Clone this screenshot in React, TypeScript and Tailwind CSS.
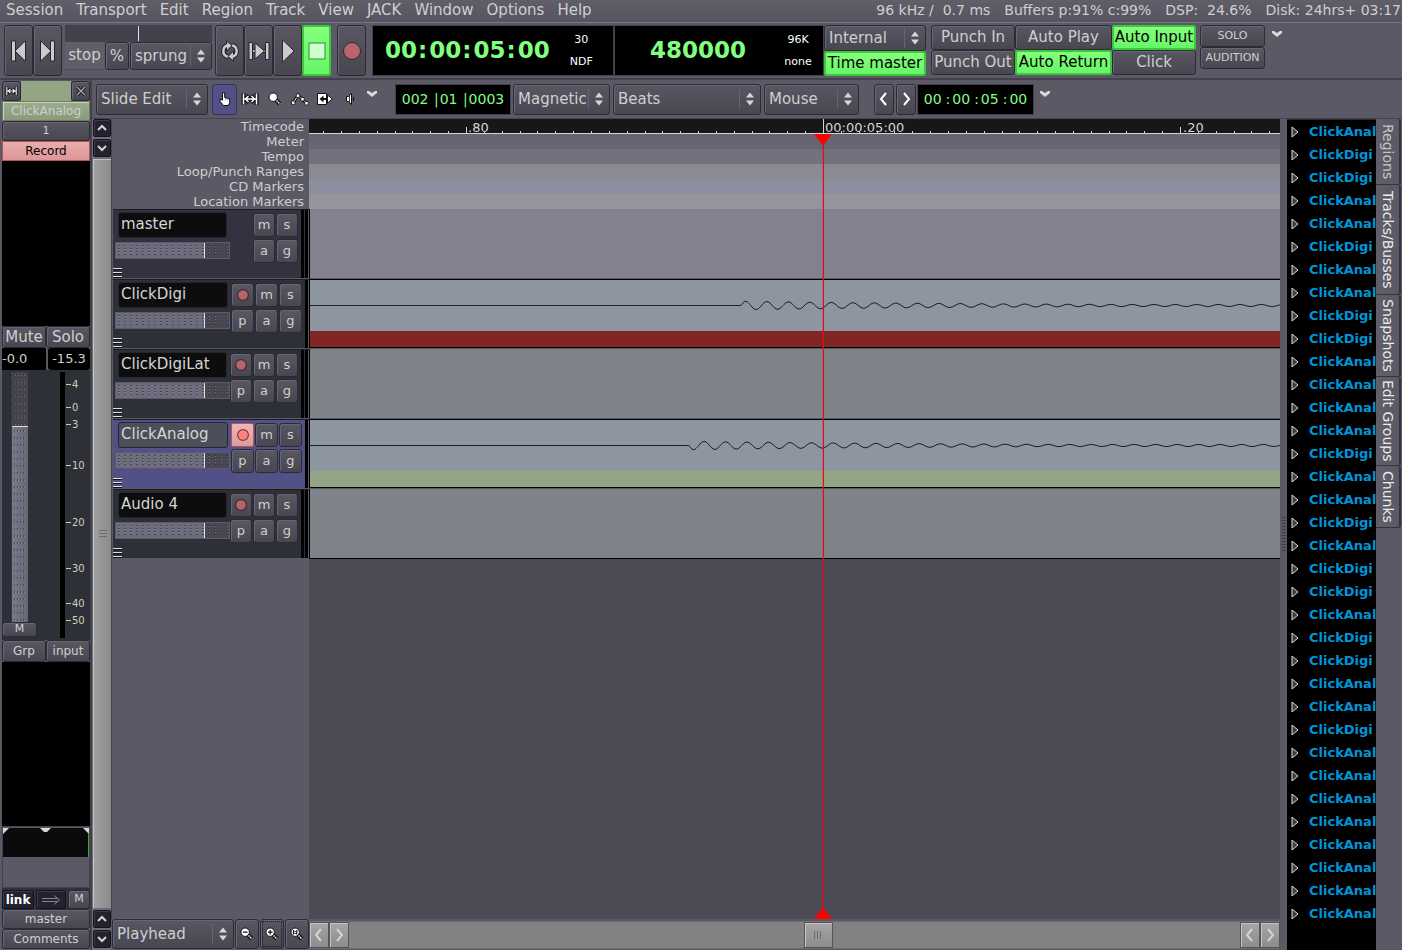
import React from "react";

const FACE =
  "bg-linear-to-b from-[#585762] to-[#484751] border border-[#2c2b33] shadow-[inset_1px_1px_0_#67657a] rounded-[3px]";
const DARK =
  "bg-[#23222e] border border-[#14141c] shadow-[inset_1px_1px_0_#3a3950] rounded-[2px]";
const GREEN =
  "bg-linear-to-b from-[#84ff7c] to-[#66f668] border-2 border-[#3cc83c] rounded-[3px] text-black";
const GREY =
  "bg-linear-to-b from-[#a6a6a6] to-[#8c8c8c] border border-[#55545c] shadow-[inset_1px_1px_0_#c4c4c4]";

type BtnProps = React.ButtonHTMLAttributes<HTMLButtonElement> & { face?: string };

function Btn({ face = FACE, className = "", children, ...rest }: BtnProps) {
  return (
    <button
      type="button"
      className={`flex shrink-0 items-center justify-center overflow-hidden whitespace-nowrap ${face} ${className}`}
      {...rest}
    >
      {children}
    </button>
  );
}

function Select({ label, value, className = "" }: { label: string; value: string; className?: string }) {
  return (
    <div className={`relative flex shrink-0 ${FACE} ${className}`}>
      <select
        aria-label={label}
        defaultValue={value}
        className="h-full w-full appearance-none bg-transparent pl-1 text-[15px] leading-5 text-[#cfcfcf] outline-none"
      >
        <option>{value}</option>
      </select>
      <svg className="pointer-events-none absolute right-px top-1/2 -translate-y-1/2" width="20" height="24">
        <path d="M0.5 2v20" stroke="#65647a" />
        <path d="M7 10.5h8L11 5.5z M7 13.5h8l-4 5z" fill="#d8d8d8" />
      </svg>
    </div>
  );
}

function Chevron({ dir, color = "#d4d4d4" }: { dir: "left" | "right" | "up" | "down"; color?: string }) {
  const d = {
    left: "M9 2 L4 8 L9 14",
    right: "M5 2 L10 8 L5 14",
    up: "M3 10 L7 6 L11 10",
    down: "M3 6 L7 10 L11 6",
  }[dir];
  return (
    <svg width="14" height="16" fill="none" stroke={color} strokeWidth="2">
      <path d={d} />
    </svg>
  );
}

function Caret() {
  return (
    <svg width="12" height="8" className="shrink-0">
      <path d="M1 1h2l3 2 3-2h2v2L6 7 1 3z" fill="#d8d8d8" />
    </svg>
  );
}

function Rec({ on = false }: { on?: boolean }) {
  return (
    <svg width="14" height="14">
      <circle cx="7" cy="7" r="5.4" fill={on ? "#ff8080" : "#b5656b"} stroke={on ? "#7a3a3a" : "#3a2a30"} strokeWidth="1.2" />
    </svg>
  );
}

/* ---------- menu bar ---------- */

const MENUS = ["Session", "Transport", "Edit", "Region", "Track", "View", "JACK", "Window", "Options", "Help"];

function MenuBar() {
  return (
    <header className="flex h-[22px] items-center justify-between bg-linear-to-b from-[#5f5e69] to-[#55545f] pr-px text-[15px] leading-5">
      <nav className="flex gap-px pb-[2px]">
        {MENUS.map((m) => (
          <button key={m} type="button" className="px-[6px]">
            {m}
          </button>
        ))}
      </nav>
      <div className="flex gap-[14px] whitespace-pre pb-[2px] text-[14px]">
        <span>{"96 kHz /  0.7 ms"}</span>
        <span>Buffers p:91% c:99%</span>
        <span>{"DSP:  24.6%"}</span>
        <span>Disk: 24hrs+ 03:17</span>
      </div>
    </header>
  );
}

/* ---------- transport ---------- */

const IC = { fill: "#cbcbcb", stroke: "#26252d", strokeWidth: 1 };

function Transport() {
  return (
    <section className="flex h-[58px] items-start border-b-2 border-t border-b-[#43424c] border-t-[#77768a] pl-1 pt-[2px]">
      <div className="flex">
        <Btn aria-label="Go to start" className="h-[51px] w-[29px]">
          <svg width="17" height="22" {...IC}>
            <path d="M1.5 1h4v20h-4z M15.5 .8v20.400L5 11z" />
          </svg>
        </Btn>
        <Btn aria-label="Go to end" className="h-[51px] w-[29px]">
          <svg width="17" height="22" {...IC}>
            <path d="M11.5 1h4v20h-4z M1.5 .8v20.400L12 11z" />
          </svg>
        </Btn>
      </div>
      <div className="ml-[3px] flex w-[147px] flex-col">
        <div className="flex h-[17px] justify-center bg-[#43424c] py-[1px]">
          <div className="w-px bg-[#d5e2f5]" />
        </div>
        <div className="flex h-7">
          <div className="flex w-[39px] items-center justify-center border-b border-[#4a4954] bg-[#5f5e69] text-[15px]">stop</div>
          <Btn className="ml-px w-6 text-[15px]">%</Btn>
          <Select label="Shuttle" value="sprung" className="ml-px w-[82px]" />
        </div>
      </div>
      <div className="ml-[3px] flex">
        <Btn aria-label="Loop" className="h-[51px] w-[29px]">
          <svg width="18" height="22" fill="none">
            <g stroke="#222129" strokeWidth="4.500">
              <path d="M7 5A6 6.200 0 0 0 7 17" />
              <path d="M11 17A6 6.200 0 0 0 11 5" />
            </g>
            <path d="M5.500 1L11 5.500 5.500 11z M12.500 21L7 16.500 12.500 11z" fill="#cbcbcb" stroke="#222129" />
            <path d="M6.800 5.200A6 6 0 0 0 6.800 16.800 M11.200 16.800A6 6 0 0 0 11.200 5.200" stroke="#cbcbcb" strokeWidth="2.500" />
          </svg>
        </Btn>
        <Btn aria-label="Play range" className="h-[51px] w-[29px]">
          <svg width="22" height="18" {...IC}>
            <path d="M4 7.500h14v3H4z" />
            <path d="M1 .5h3.500v17H1z M17.500 .5H21v17h-3.500z" />
            <path d="M7 1v16L16.500 9z" />
          </svg>
        </Btn>
        <Btn aria-label="Play" className="h-[51px] w-[29px]">
          <svg width="14" height="24" {...IC}>
            <path d="M1.500 .8v22.400L13 12z" />
          </svg>
        </Btn>
        <Btn aria-label="Stop" face={GREEN} className="h-[51px] w-[29px]">
          <svg width="18" height="18">
            <rect x="1" y="1" width="16" height="16" fill="#ccffcc" stroke="#3a8a3a" />
          </svg>
        </Btn>
        <Btn aria-label="Record" className="ml-[6px] h-[51px] w-[29px]">
          <svg width="20" height="20">
            <circle cx="10" cy="10" r="8.5" fill="#b5656b" stroke="#33272d" />
          </svg>
        </Btn>
      </div>

      <div className="ml-[6px] flex h-[51px] w-[242px] border border-[#43424c] bg-black">
        <div className="flex flex-1 items-center pl-3 text-[23px] font-bold text-[#80ff80]">
          00<Colon big />00<Colon big />05<Colon big />00
        </div>
        <div className="flex w-16 flex-col items-center justify-center gap-[2px] text-[11px] leading-5 text-white">
          <span>30</span>
          <span>NDF</span>
        </div>
      </div>
      <div className="flex h-[51px] w-[210px] border border-[#43424c] bg-black">
        <div className="flex flex-1 items-center justify-center pl-2 text-[23px] font-bold text-[#80ff80]">480000</div>
        <div className="flex w-[50px] flex-col items-center justify-center gap-[2px] text-[11px] leading-5 text-white">
          <span>96K</span>
          <span>none</span>
        </div>
      </div>

      <div className="flex w-[102px] flex-col text-[15px]">
        <Select label="Sync source" value="Internal" className="h-[26px]" />
        <Btn face={GREEN} className="h-[25px]">Time master</Btn>
      </div>
      <div className="ml-[5px] grid grid-cols-[84px_97px_84px] grid-rows-[25px_25px] text-[15px]">
        <Btn>Punch In</Btn>
        <Btn>Auto Play</Btn>
        <Btn face={GREEN}>Auto Input</Btn>
        <Btn>Punch Out</Btn>
        <Btn face={GREEN}>Auto Return</Btn>
        <Btn>Click</Btn>
      </div>
      <div className="ml-1 flex w-[65px] flex-col text-[11px]">
        <Btn className="h-[22px]">SOLO</Btn>
        <Btn className="h-[22px]">AUDITION</Btn>
      </div>
      <div className="ml-[6px] pt-[5px]">
        <Caret />
      </div>
    </section>
  );
}

function Colon({ big = false }: { big?: boolean }) {
  return <span className={big ? "pl-px pr-[2px]" : "pl-1 pr-[2px]"}>:</span>;
}

/* ---------- edit toolbar ---------- */

function RangeIcon({ w = 18 }: { w?: number }) {
  return (
    <svg width={w} height="12" viewBox="0 0 18 12">
      <path d="M2.5 0v12 M15.5 0v12 M3 6h12 M8 2.5L4.5 6 8 9.5 M10 2.5L13.5 6 10 9.5" fill="none" stroke="#111" strokeWidth="4" />
      <path d="M2.5 0.5v11 M15.5 0.5v11 M3 6h12 M7.5 3L4.5 6l3 3 M10.5 3l3 3-3 3" fill="none" stroke="#fff" strokeWidth="1.5" />
    </svg>
  );
}

function Magnifier({ sign }: { sign?: string }) {
  return (
    <svg width="14" height="14">
      <path d="M7 7l5 5" stroke="#111" strokeWidth="4" />
      <path d="M7 7l5 5" stroke="#fff" strokeWidth="1.6" strokeDasharray="1.4 0.8" />
      <circle cx="5.2" cy="5.2" r="4.2" fill="#fff" stroke="#111" />
      {sign && <path d={sign} stroke="#111" strokeWidth="1.2" fill="none" />}
    </svg>
  );
}

function EditToolbar() {
  const tool = "flex h-[31px] w-[25px] shrink-0 items-center justify-center";
  return (
    <div className="flex h-[39px] items-center border-b border-[#45444e] pl-1 text-[15px]">
      <Select label="Edit mode" value="Slide Edit" className="h-[31px] w-[112px]" />
      <div className="ml-1 flex">
        <button type="button" aria-label="Object tool" className="flex h-[31px] w-[25px] items-center justify-center rounded-[3px] border border-[#35355c] bg-[#515187]">
          <svg width="12" height="14">
            <path d="M3.5 .8h2.200v4.700l5 1.200v4.200l-1.700 2.600h-4.500L1 9.200V7.200l2.500 1z" fill="#fff" stroke="#111" strokeWidth="1" />
            <path d="M6.800 6v2 M8.800 6.500v2" stroke="#555" strokeWidth=".7" />
          </svg>
        </button>
        <button type="button" aria-label="Range tool" className={tool}><RangeIcon /></button>
        <button type="button" aria-label="Zoom tool" className={tool}><Magnifier /></button>
        <button type="button" aria-label="Gain tool" className={tool}>
          <svg width="18" height="14">
            <path d="M2 11L7 3.500 11.500 7.500 15.500 11.500" fill="none" stroke="#111" strokeWidth="3" />
            <path d="M2 11L7 3.500 11.500 7.500 15.500 11.500" fill="none" stroke="#fff" />
            <path d="M.5 9h3.400v3.400H.5z M5.300 2h3.400v3.400H5.300z M9.800 5.500h3.400v3.400H9.800z M13.800 9.500h3.400v3.400h-3.400z" fill="#fff" stroke="#111" strokeWidth=".8" />
          </svg>
        </button>
        <button type="button" aria-label="Stretch tool" className={tool}>
          <svg width="16" height="12">
            <path d="M.5.5h9v11h-9z" fill="#fff" stroke="#111" />
            <path d="M2.500 6L6.500 2.500v7z" fill="#111" />
            <path d="M6 6h5" stroke="#111" strokeWidth="2" />
            <path d="M10.500 2L15.300 6l-4.800 4z" fill="#fff" stroke="#111" />
          </svg>
        </button>
        <button type="button" aria-label="Audition tool" className={tool}>
          <svg width="10" height="12">
            <path d="M1.500 3.500h2l3-3v11l-3-3h-2z" fill="#fff" stroke="#111" />
            <path d="M4.500 3v6" stroke="#111" strokeWidth=".8" />
            <path d="M8.500 4v4" stroke="#111" />
          </svg>
        </button>
      </div>
      <div className="ml-1 pb-[10px]"><Caret /></div>
      <div className="ml-[17px] flex h-[31px] w-[116px] items-center justify-center whitespace-pre border border-[#43424c] bg-black text-[14px] text-[#80ff80]">
        <span>002 </span>
        <span className="px-px">|</span>
        <span>01 </span>
        <span className="px-px">|</span>
        <span>0003</span>
      </div>
      <Select label="Snap mode" value="Magnetic" className="ml-[2px] h-[31px] w-[97px]" />
      <Select label="Snap unit" value="Beats" className="ml-[3px] h-[31px] w-[148px]" />
      <Select label="Zoom focus" value="Mouse" className="ml-[3px] h-[31px] w-[95px]" />
      <div className="ml-[15px] flex gap-[2px]">
        <Btn aria-label="Nudge back" className="h-[31px] w-5"><Chevron dir="left" color="#fff" /></Btn>
        <Btn aria-label="Nudge forward" className="h-[31px] w-5"><Chevron dir="right" color="#fff" /></Btn>
      </div>
      <div className="ml-px flex h-[31px] w-[117px] items-center justify-center border border-[#43424c] bg-black text-[14px] text-[#80ff80]">
        00<Colon />00<Colon />05<Colon />00
      </div>
      <div className="ml-[5px] pb-[10px]"><Caret /></div>
    </div>
  );
}

/* ---------- mixer strip ---------- */

const SCALE: [string, number][] = [
  ["4", 12], ["0", 35], ["3", 52], ["10", 93], ["20", 150], ["30", 196], ["40", 231], ["50", 248],
];

function MixerStrip() {
  return (
    <aside className="flex w-[92px] shrink-0 flex-col border-r-2 border-[#43424c] pl-[2px] text-[12px]">
      <div className="flex h-[21px] pt-px">
        <Btn aria-label="Strip width" className="w-[19px]"><RangeIcon w={13} /></Btn>
        <div className="flex-1 bg-[#94a585]" />
        <Btn aria-label="Close strip" className="w-[19px]">
          <svg width="12" height="12" fill="none">
            <path d="M2 2l8 8 M10 2l-8 8" stroke="#1c1b22" strokeWidth="3.6" />
            <path d="M2 2l8 8 M10 2l-8 8" stroke="#a8a8b0" strokeWidth="1.4" />
          </svg>
        </Btn>
      </div>
      <Btn face="bg-linear-to-b from-[#9bad8c] to-[#8a9b7b] border border-[#6e7d62] shadow-[inset_1px_1px_0_#c3d3b4]" className="h-5">ClickAnalog</Btn>
      <Btn className="h-5 text-[11px]">1</Btn>
      <Btn face="bg-linear-to-b from-[#e9adad] to-[#dd9696] border border-[#b55555] text-black" className="h-5">Record</Btn>
      <div className="h-[165px] bg-black" />
      <div className="flex h-[22px] text-[15px]">
        <Btn className="w-11">Mute</Btn>
        <Btn className="flex-1">Solo</Btn>
      </div>
      <div className="flex h-[22px] gap-[2px] text-[13px] leading-[22px]">
        <div className="w-11 bg-black">-0.0</div>
        <div className="flex-1 rounded-[3px] bg-black text-center">-15.3</div>
      </div>
      <div className="flex h-[270px] bg-[#2d3036] pt-[2px]">
        <div className="flex w-[35px] flex-col items-center">
          <div className="relative h-[250px] w-[17px]">
            <svg width="17" height="250">
              <defs>
                <pattern id="vdots" width="17" height="7" patternUnits="userSpaceOnUse">
                  <path d="M3 2h1v2h-1z M6 2h1v2h-1z M9 2h1v2h-1z M12 2h1v2h-1z" fill="#33323a" fillOpacity=".6" />
                  <path d="M4 3h1v1h-1z M7 3h1v1h-1z M10 3h1v1h-1z M13 3h1v1h-1z" fill="#a9a8b8" fillOpacity=".5" />
                </pattern>
                <linearGradient id="vfill"><stop stopColor="#7b7a8a" /><stop offset="1" stopColor="#676676" /></linearGradient>
              </defs>
              <rect width="17" height="250" fill="#46454f" />
              <rect y="54" width="17" height="196" fill="url(#vfill)" />
              <rect width="17" height="250" fill="url(#vdots)" />
              <path d="M1 54.5h16" stroke="#dedede" />
              <path d="M.5 0v250" stroke="#3a3943" />
            </svg>
            <input aria-label="Gain" type="range" className="absolute inset-0 h-full w-full opacity-0" />
          </div>
          <Btn className="h-[15px] w-[35px] text-[11px]">M</Btn>
        </div>
        <svg className="ml-[23px]" width="30" height="266">
          <rect width="5" height="266" fill="#000" />
          {SCALE.map(([t, y]) => (
            <g key={t}>
              <path d={`M6 ${y + 0.5}h5`} stroke="#cfcfb8" />
              <text x="12" y={y + 4} fontSize="10" fill="#cfcfb8">{t}</text>
            </g>
          ))}
        </svg>
      </div>
      <div className="flex h-[22px]">
        <Btn className="w-11">Grp</Btn>
        <Btn className="flex-1">input</Btn>
      </div>
      <div className="min-h-[100px] flex-1 bg-black" />
      <div className="h-[62px] border border-[#45444e] pt-px">
        <svg width="86" height="29">
          <rect width="86" height="29" fill="#0b0b0b" />
          <path d="M0 0h6L0 6z M86 0h-6l6 6z M37 0h11l-4 4h-3z" fill="#d8d8d8" />
          <path d="M85.500 6v23" stroke="#30b030" />
        </svg>
      </div>
      <div className="flex h-[21px] gap-[2px] bg-[#33323b] pt-[2px]">
        <Btn face={DARK} className="w-8 font-bold text-white">link</Btn>
        <Btn face={DARK} aria-label="Post fader" className="flex-1">
          <svg width="20" height="10" fill="none" stroke="#858590">
            <path d="M1 3.5h15 M1 6.5h15 M13 .5L18.500 5 13 9.500" />
          </svg>
        </Btn>
        <Btn className="w-[22px] text-[11px]">M</Btn>
      </div>
      <Btn className="h-5">master</Btn>
      <Btn className="mb-px h-5">Comments</Btn>
    </aside>
  );
}

/* ---------- editor ---------- */

const RULERS = [
  { label: "Timecode", bg: "" },
  { label: "Meter", bg: "bg-[#666571]" },
  { label: "Tempo", bg: "bg-[#72717c]" },
  { label: "Loop/Punch Ranges", bg: "bg-[#8b8a93]" },
  { label: "CD Markers", bg: "bg-[#8d8ea0]" },
  { label: "Location Markers", bg: "bg-[#96959d]" },
];

type Track = {
  name: string;
  kind: "bus" | "stereo" | "mono";
  selected?: boolean;
  wave?: { start: number; dir: 1 | -1; bar: string };
};

const TRACKS: Track[] = [
  { name: "master", kind: "bus" },
  { name: "ClickDigi", kind: "stereo", wave: { start: 430, dir: -1, bar: "bg-[#822625]" } },
  { name: "ClickDigiLat", kind: "mono" },
  { name: "ClickAnalog", kind: "stereo", selected: true, wave: { start: 378, dir: 1, bar: "bg-[#94a585]" } },
  { name: "Audio 4", kind: "mono" },
];

function HFader({ id }: { id: string }) {
  return (
    <div className="relative h-[17px] w-[115px]">
      <svg width="115" height="17">
        <defs>
          <pattern id={id} width="6" height="17" patternUnits="userSpaceOnUse">
            <path d="M3 3h2v1h-2z M3 6h2v1h-2z M3 9h2v1h-2z M3 12h2v1h-2z" fill="#33323a" fillOpacity=".65" />
            <path d="M4 4h1v1h-1z M4 7h1v1h-1z M4 10h1v1h-1z" fill="#b0afbf" fillOpacity=".4" />
          </pattern>
        </defs>
        <rect width="115" height="17" fill="#494852" />
        <rect width="90" height="17" fill="#6d6c7c" />
        <rect width="115" height="17" fill={`url(#${id})`} />
        <rect x=".5" y=".5" width="114" height="16" fill="none" stroke="#5c5b69" />
        <path d="M89.500 1v15" stroke="#e0e0e0" />
      </svg>
      <input aria-label="Track gain" type="range" className="absolute inset-0 h-full w-full opacity-0" />
    </div>
  );
}

function TrackHeader({ t, i }: { t: Track; i: number }) {
  const wide = t.kind === "stereo";
  const bg = t.selected ? "bg-[#515187]" : t.kind === "bus" ? "bg-[#343240]" : "bg-[#2d3036]";
  const cell = wide ? "h-6 w-[23px]" : "h-6 w-[22px]";
  const keys = t.kind === "bus" ? [["m", "s"], ["a", "g"]] : [["rec", "m", "s"], ["p", "a", "g"]];
  return (
    <div className={`flex h-[70px] border-t border-t-[#1c1c22] border-b border-b-[#5a5965] ${bg}`}>
      <div className="flex w-[117px] flex-col pt-[2px]">
        <input
          aria-label="Track name"
          defaultValue={t.name}
          className={`ml-[5px] h-[26px] rounded-[3px] border border-[#26262c] px-[2px] pb-[3px] text-[15px] text-[#d5d5d5] outline-none ${
            wide ? "w-[110px]" : "w-[109px]"
          } ${t.selected ? "bg-[#4b4f59]" : "bg-[#0d0d0d]"}`}
        />
        <div className="ml-[2px] mt-1"><HFader id={`hdots${i}`} /></div>
        <svg className="mt-[9px]" width="10" height="10">
          <path d="M0 1.500h9 M0 5.500h9 M0 9.500h9" stroke="#111" strokeWidth="1" />
          <path d="M0 .5h9 M0 4.500h9 M0 8.500h9" stroke="#e0e0e0" strokeWidth="1" />
        </svg>
      </div>
      <div className="flex flex-1 flex-col items-end gap-[2px] pr-[3px] pt-[3px]">
        {keys.map((row) => (
          <div key={row.join("")} className="flex gap-px">
            {row.map((k) =>
              k === "rec" ? (
                <Btn
                  key={k}
                  aria-label="Record enable"
                  face={t.selected ? "bg-linear-to-b from-[#f0b4b4] to-[#de9a9a] border border-[#b55555] rounded-[2px]" : FACE}
                  className={cell}
                >
                  <Rec on={t.selected} />
                </Btn>
              ) : (
                <Btn key={k} className={`${cell} pb-px text-[13px]`}>{k}</Btn>
              ),
            )}
          </div>
        ))}
      </div>
      {!wide && <div className="mr-px w-[3px] bg-black" />}
      <div className="w-[3px] bg-black" />
      <div className="w-px bg-[#5a5965]" />
    </div>
  );
}

function wavePath(start: number, dir: number) {
  const pts: string[] = [`M0 25.500H${start}`];
  for (let x = 0; x < 2600; x += 1) {
    const amp = Math.max(1, 4.3 * Math.exp(-x / 270)) * Math.min(1, x / 4);
    const y = 25.5 + dir * amp * Math.sin((2 * Math.PI * x) / 21.5);
    pts.push(`L${start + x} ${y.toFixed(1)}`);
  }
  return pts.join("");
}

function TrackLane({ t }: { t: Track }) {
  if (t.wave) {
    return (
      <div className="flex h-[70px] flex-col border-b border-[#5a5965]">
        <div className="flex flex-1 flex-col border border-r-0 border-black bg-[#8d95a1]">
          <svg className="block w-full flex-1" height="51">
            <path d={wavePath(t.wave.start, t.wave.dir)} fill="none" stroke="#1d2126" strokeWidth="1" />
          </svg>
          <div className={`h-4 ${t.wave.bar}`} />
        </div>
      </div>
    );
  }
  return (
    <div
      className={`h-[70px] border-b border-l border-b-[#5a5965] border-l-black last:border-b-black ${
        t.kind === "bus" ? "bg-[#858090]" : "bg-[#7e8389]"
      }`}
    />
  );
}

function TimeRuler() {
  const ticks = Array.from({ length: 140 }, (_, i) => 514 + (i - 28) * 17.85).filter((x) => x >= 0);
  return (
    <div className="h-[15px] border-b border-[#d4d4d4] bg-[#171717]">
      <svg className="block w-full overflow-visible" height="14">
        {ticks.map((x) => (
          <path key={x} d={`M${Math.round(x) + 0.5} 12v2`} stroke="#d4d4d4" />
        ))}
        <path d="M157.500 8v6 M514.500 0v14 M871.500 8v6" stroke="#d4d4d4" />
        <g fontSize="13" fill="#d4d4d4">
          <text x="159" y="13">.80</text>
          <text x="516" y="13">00:00:05:00</text>
          <text x="874" y="13">.20</text>
        </g>
      </svg>
    </div>
  );
}

function Editor() {
  return (
    <main className="flex min-w-0 flex-1 flex-col">
      <div className="flex flex-1">
        <div className="w-[198px] shrink-0 border-l border-[#45444e] pl-px">
          {RULERS.map((r) => (
            <div key={r.label} className="h-[15px] pr-[5px] text-right text-[13px] leading-[15px]">{r.label}</div>
          ))}
          {TRACKS.map((t, i) => (
            <TrackHeader key={t.name} t={t} i={i} />
          ))}
        </div>
        <div className="relative min-w-0 flex-1 overflow-hidden bg-[#4c4b55]">
          <TimeRuler />
          {RULERS.slice(1).map((r) => (
            <div key={r.label} className={`h-[15px] ${r.bg}`} />
          ))}
          <div>
            {TRACKS.map((t) => (
              <TrackLane key={t.name} t={t} />
            ))}
          </div>
          <div className="absolute bottom-0 left-[505px] top-[15px] flex w-[18px] flex-col items-center">
            <svg width="18" height="11" className="shrink-0"><path d="M0 0h18L9.500 11h-1z" fill="#f00" /></svg>
            <div className="w-[2px] flex-1 border-l border-[#ff0000]/25 bg-[#e01010] bg-clip-padding" />
            <svg width="18" height="11" className="shrink-0"><path d="M0 11h18L9.500 0h-1z" fill="#f00" /></svg>
          </div>
        </div>
      </div>
      <div className="flex h-[31px] items-start">
        <Select label="Zoom focus point" value="Playhead" className="ml-px h-[30px] w-[122px]" />
        <div className="flex">
          <Btn aria-label="Zoom out" className="ml-px h-[30px] w-6"><Magnifier sign="M3 5.200h4.500" /></Btn>
          <Btn aria-label="Zoom in" className="ml-px h-[30px] w-6 outline-1 -outline-offset-3 outline-dotted outline-[#1a1a20]"><Magnifier sign="M3 5.200h4.500 M5.200 3v4.500" /></Btn>
          <Btn aria-label="Zoom to session" className="ml-px h-[30px] w-6"><Magnifier sign="M3.500 3v4.500 M6.800 3v4.500 M5.200 4v1 M5.200 6v1" /></Btn>
        </div>
        <div className="mt-[2px] flex h-7 min-w-0 flex-1 items-stretch border-y border-[#6b6a75] bg-[#828282]">
          <Btn aria-label="Scroll left" face={GREY} className="w-5"><Chevron dir="left" /></Btn>
          <Btn aria-label="Scroll right" face={GREY} className="w-5"><Chevron dir="right" /></Btn>
          <div className="flex-[456]" />
          <Btn aria-label="Scroll thumb" face={GREY} className="w-[29px]">
            <svg width="8" height="8"><path d="M.5 0v8 M3.500 0v8 M6.500 0v8" stroke="#6c6c6c" /></svg>
          </Btn>
          <div className="flex-[408]" />
          <Btn aria-label="Page left" face={GREY} className="w-5"><Chevron dir="left" /></Btn>
          <Btn aria-label="Page right" face={GREY} className="w-5"><Chevron dir="right" /></Btn>
        </div>
      </div>
    </main>
  );
}

function VScroll() {
  return (
    <div className="flex w-[19px] shrink-0 flex-col gap-[2px] bg-[#6f6e76] pb-[2px] pl-px">
      <Btn aria-label="Page up" face={DARK} className="h-[18px]"><Chevron dir="up" /></Btn>
      <Btn aria-label="Page down" face={DARK} className="h-[18px]"><Chevron dir="down" /></Btn>
      <div className="flex flex-1 items-center justify-center border-l border-t border-[#c4c4c4] bg-linear-to-r from-[#a0a0a0] to-[#8a8a8a]">
        <svg width="8" height="8"><path d="M0 .5h8 M0 3.500h8 M0 6.500h8" stroke="#6c6c6c" /></svg>
      </div>
      <Btn aria-label="Scroll up" face={DARK} className="h-[18px]"><Chevron dir="up" /></Btn>
      <Btn aria-label="Scroll down" face={DARK} className="h-[18px]"><Chevron dir="down" /></Btn>
    </div>
  );
}

/* ---------- region list ---------- */

const REGIONS = "ADDAADAADDAAAADAADADDADDAADAAAAAAAA".split("").map((c) => (c === "A" ? "ClickAnalog" : "ClickDigi"));

const TABS: [string, string][] = [
  ["Regions", "h-[66px] text-[#c6c6c6]"],
  ["Tracks/Busses", "h-[110px] text-[#ececec]"],
  ["Snapshots", "h-[82px] text-[#ececec]"],
  ["Edit Groups", "h-[89px] text-[#ececec]"],
  ["Chunks", "h-[62px] text-[#ececec]"],
];

function RegionPanel() {
  return (
    <aside className="flex shrink-0">
      <div className="flex w-[7px] items-center justify-center">
        <svg width="4" height="36">
          {Array.from({ length: 12 }, (_, i) => (
            <path key={i} d={`M0 ${i * 3 + 0.5}h4`} stroke="#3e3d47" />
          ))}
        </svg>
      </div>
      <ul className="w-[89px] overflow-hidden border-t border-[#2c2b33] bg-black pb-6">
        {REGIONS.map((r, i) => (
          <li key={i} className="flex h-[23px] items-center text-[13px] font-bold text-[#0095d8]">
            <svg width="8" height="12" className="ml-1 mr-[10px] shrink-0">
              <path d="M1 1v10L7 6z" fill="#3c3b45" stroke="#dcdcdc" strokeWidth="1" />
            </svg>
            {r}
          </li>
        ))}
      </ul>
      <div className="mr-px flex w-[25px] flex-col">
        {TABS.map(([name, cls]) => (
          <button
            key={name}
            type="button"
            className={`flex items-center justify-center rounded-r-[3px] border-b border-r-2 border-[#35343d] bg-linear-to-r from-[#5f5e69] to-[#5a5965] text-[14px] [writing-mode:vertical-rl] ${cls}`}
          >
            {name}
          </button>
        ))}
      </div>
    </aside>
  );
}

export default function App() {
  return (
    <div className="flex min-h-screen flex-col overflow-hidden bg-[#5a5965] font-['DejaVu_Sans',sans-serif] text-[#cfcfcf]">
      <MenuBar />
      <Transport />
      <div className="flex flex-1">
        <MixerStrip />
        <div className="flex min-w-0 flex-1 flex-col">
          <EditToolbar />
          <div className="flex flex-1">
            <VScroll />
            <Editor />
            <RegionPanel />
          </div>
        </div>
      </div>
    </div>
  );
}
